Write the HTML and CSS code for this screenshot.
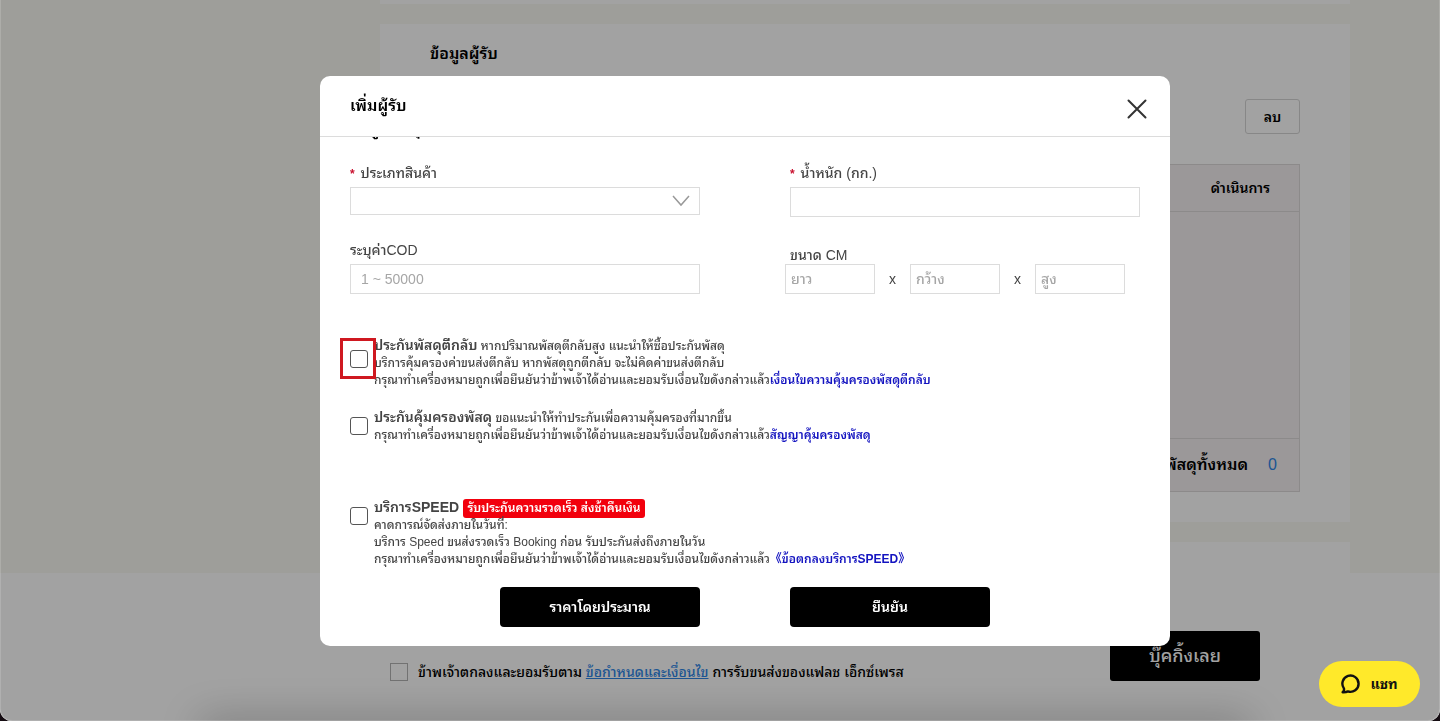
FILE: index.html
```html
<!DOCTYPE html>
<html lang="th">
<head>
<meta charset="utf-8">
<meta name="viewport" content="width=device-width, initial-scale=1">
<title>เพิ่มผู้รับ</title>
<link rel="stylesheet" href="styles.css">
</head>
<body>
<div class="app">
  <main class="page">
    <section class="card card-prev"></section>
    <section class="card card-recipients">
      <h2 class="card-title">ข้อมูลผู้รับ</h2>
      <div class="toolbar"><button type="button" class="delete-btn">ลบ</button></div>
      <table class="recipients">
        <thead><tr><th scope="col">ดำเนินการ</th></tr></thead>
        <tbody><tr><td></td></tr></tbody>
        <tfoot><tr><td><span class="total-label">พัสดุทั้งหมด</span><span class="total-value">0</span></td></tr></tfoot>
      </table>
    </section>
    <section class="card card-next"></section>
  </main>
  <footer class="booking-bar">
    <div class="agree">
      <input type="checkbox" id="agree" class="agree-box">
      <label for="agree">ข้าพเจ้าตกลงและยอมรับตาม <a href="#terms" class="terms">ข้อกำหนดและเงื่อนไข</a> การรับขนส่งของแฟลช เอ็กซ์เพรส</label>
    </div>
    <button type="button" class="book-btn">บุ๊คกิ้งเลย</button>
  </footer>
  <div class="bar-shadow"></div>
</div>

<div class="overlay">
  <div class="modal" role="dialog" aria-modal="true" aria-labelledby="modal-title">
    <header class="modal-head">
      <h1 class="modal-title" id="modal-title">เพิ่มผู้รับ</h1>
      <button type="button" class="close-btn" aria-label="ปิด">
        <svg width="20" height="20" viewBox="0 0 20 20" fill="none" stroke="#333" stroke-width="2" stroke-linecap="round"><path d="M1.5 1.5 18.500 18.500M18.500 1.5 1.5 18.500"/></svg>
      </button>
    </header>
    <form class="modal-body">
      <h2 class="section-title">ข้อมูลพัสดุ</h2>
      <div class="fields fields-first">
        <div class="field">
          <label for="type"><span class="req">*</span> ประเภทสินค้า</label>
          <div class="select-wrap">
            <select id="type" class="box"><option></option></select>
            <svg class="chevron" width="18" height="12" viewBox="0 0 18 12" fill="none" stroke="#999" stroke-width="1.500"><path d="M1 1l8 9 8-9"/></svg>
          </div>
        </div>
        <div class="field">
          <label for="weight"><span class="req">*</span> น้ำหนัก (กก.)</label>
          <input id="weight" class="box" type="text">
        </div>
      </div>
      <div class="fields">
        <div class="field">
          <label for="cod">ระบุค่าCOD</label>
          <input id="cod" class="box" type="text" placeholder="1 ~ 50000">
        </div>
        <div class="field field-size">
          <label for="len">ขนาด CM</label>
          <div class="sizes">
            <input id="len" class="box size" type="text" placeholder="ยาว">
            <span>x</span>
            <input class="box size" type="text" placeholder="กว้าง" aria-label="กว้าง">
            <span>x</span>
            <input class="box size" type="text" placeholder="สูง" aria-label="สูง">
          </div>
        </div>
      </div>
      <div class="option option-return">
        <div class="mark"><input type="checkbox" id="opt-return" class="tick"></div>
        <label for="opt-return"><b>ประกันพัสดุตีกลับ</b> หากปริมาณพัสดุตีกลับสูง แนะนำให้ซื้อประกันพัสดุ<br>บริการคุ้มครองค่าขนส่งตีกลับ หากพัสดุถูกตีกลับ จะไม่คิดค่าขนส่งตีกลับ<br>กรุณาทำเครื่องหมายถูกเพื่อยืนยันว่าข้าพเจ้าได้อ่านและยอมรับเงื่อนไขดังกล่าวแล้ว<a href="#return-terms">เงื่อนไขความคุ้มครองพัสดุตีกลับ</a></label>
      </div>
      <div class="option option-cover">
        <input type="checkbox" id="opt-cover" class="tick">
        <label for="opt-cover"><b>ประกันคุ้มครองพัสดุ</b> ขอแนะนำให้ทำประกันเพื่อความคุ้มครองที่มากขึ้น<br>กรุณาทำเครื่องหมายถูกเพื่อยืนยันว่าข้าพเจ้าได้อ่านและยอมรับเงื่อนไขดังกล่าวแล้ว<a href="#cover-terms">สัญญาคุ้มครองพัสดุ</a></label>
      </div>
      <div class="option option-speed">
        <input type="checkbox" id="opt-speed" class="tick">
        <label for="opt-speed"><b>บริการSPEED</b> <span class="tag">รับประกันความรวดเร็ว ส่งช้าคืนเงิน</span><br>คาดการณ์จัดส่งภายในวันที่:<br>บริการ Speed ขนส่งรวดเร็ว Booking ก่อน รับประกันส่งถึงภายในวัน<br>กรุณาทำเครื่องหมายถูกเพื่อยืนยันว่าข้าพเจ้าได้อ่านและยอมรับเงื่อนไขดังกล่าวแล้ว<a href="#speed-terms">《ข้อตกลงบริการSPEED》</a></label>
      </div>
      <div class="actions">
        <button type="button" class="action">ราคาโดยประมาณ</button>
        <button type="submit" class="action">ยืนยัน</button>
      </div>
    </form>
  </div>
</div>

<button type="button" class="chat">
  <svg width="20" height="20" viewBox="0 0 20 20" fill="none" stroke="#111" stroke-width="2.400" stroke-linejoin="round"><path d="M1.600 18.300c1.300-1 1.700-2.300 1.300-3.900A8.100 8.100 0 1 1 7 17.400c-1.500.8-3.300 1-5.400.9z"/></svg>
  <span>แชท</span>
</button>
</body>
</html>
```
FILE: styles.css
```css
*, *::before, *::after { box-sizing: border-box; }

body {
  margin: 0;
  background: #150c12;
  color: #000;
  font-family: "Liberation Sans", "Noto Sans Thai Looped", "Noto Sans Thai", "Noto Sans", "Noto Sans CJK SC", sans-serif;
  font-size: 14px;
  font-weight: 500;
  line-height: 20px;
}

h1, h2, th { margin: 0; font-weight: 600; }
button, input, select { font: inherit; }

.app {
  position: relative;
  display: flex;
  flex-direction: column;
  height: 100vh;
  overflow: hidden;
  border-radius: 0 0 12px 12px;
  background: #f9f9f3;
}

.page {
  flex: 1;
  min-height: 0;
  overflow: hidden;
  display: flex;
  flex-direction: column;
  gap: 20px;
  padding: 0 90px 0 380px;
}

.card { background: #fff; flex: none; }
.card-prev { height: 4px; }
.card-next { height: 60px; }
.card-recipients { padding: 18px 50px 30px; }

.card-title { font-size: 16px; line-height: 24px; }

.toolbar {
  display: flex;
  justify-content: flex-end;
  padding: 33px 0 30px;
}

.delete-btn {
  width: 55px;
  height: 35px;
  padding: 0;
  border: 1px solid #d5d5d5;
  border-radius: 3px;
  background: #fff;
  color: #000;
  font-weight: 600;
}

.recipients {
  width: 100%;
  border-collapse: collapse;
  background: #f4eff1;
  border: 1px solid #dcd9da;
  text-align: right;
}

.recipients th {
  height: 47px;
  padding: 0 29px;
  border-bottom: 1px solid #dcd9da;
  text-align: right;
}

.recipients tbody td { height: 227px; }

.recipients tfoot td {
  height: 53px;
  padding: 0 22px;
  border-top: 1px solid #dcd9da;
  font-size: 16px;
  font-weight: 600;
}

.total-value { margin-left: 20px; color: #2f86e6; font-weight: 500; }

.booking-bar {
  flex: none;
  display: flex;
  justify-content: space-between;
  align-items: flex-start;
  height: 148px;
  padding: 58px 180px 0 390px;
  background: #fff;
}

.agree {
  display: flex;
  align-items: center;
  gap: 10px;
  padding-top: 30px;
}

.agree label { line-height: 22px; }
.terms { color: #2f86e6; }

.agree-box {
  appearance: none;
  width: 18px;
  height: 18px;
  margin: 0;
  border: 1px solid #b4b4b4;
}

.book-btn {
  width: 150px;
  height: 50px;
  padding: 0;
  border: 0;
  border-radius: 3px;
  background: #000;
  color: #fff;
  font-size: 18px;
}

.bar-shadow {
  position: absolute;
  right: 190px;
  bottom: -20px;
  left: 200px;
  height: 20px;
  box-shadow: 0 0 40px 0 rgba(0, 0, 0, .32);
}

.overlay {
  position: fixed;
  inset: 0;
  display: flex;
  justify-content: center;
  align-items: flex-start;
  padding: 76px 0 0 50px;
  border: 1px solid rgba(255, 255, 255, .15);
  border-top: 0;
  border-radius: 0 0 12px 12px;
  background: rgba(0, 0, 0, .365);
}

.modal {
  display: flex;
  flex-direction: column;
  width: 850px;
  border-radius: 10px;
  background: #fff;
  overflow: hidden;
}

.modal-head {
  display: flex;
  justify-content: space-between;
  align-items: flex-start;
  height: 61px;
  padding: 18px 23px 0 30px;
  border-bottom: 1px solid #dcdcdc;
}

.modal-title { font-size: 16px; line-height: 24px; }

.close-btn {
  display: flex;
  padding: 5px 0 0;
  border: 0;
  background: none;
}

.modal-body {
  display: flex;
  flex-direction: column;
  justify-content: flex-end;
  height: 509px;
  padding: 0 30px 19px;
  overflow: hidden;
  color: #444;
}

.section-title { color: #000; font-size: 16px; line-height: 24px; }

.fields {
  display: grid;
  grid-template-columns: 1fr 1fr;
  gap: 90px;
  align-items: end;
  padding-bottom: 43px;
}

.fields-first {
  align-items: start;
  padding: 18px 0 19px;
}

.field { display: flex; flex-direction: column; }
.field > label { line-height: 28px; }
.field-size > label { line-height: 18px; }
.req { color: #c8102e; margin-right: 2px; font-size: 12px; font-weight: 600; line-height: 12px; }

.box {
  width: 100%;
  height: 30px;
  padding: 0 10px;
  border: 1px solid #dcdcdc;
  border-radius: 0;
  background: #fff;
  color: #444;
}

.box::placeholder { color: #a6a6a6; opacity: 1; }

.select-wrap { position: relative; display: flex; }
.select-wrap .box { height: 28px; appearance: none; }

.chevron {
  position: absolute;
  top: 8px;
  right: 10px;
  pointer-events: none;
}

.sizes {
  display: flex;
  align-items: center;
  margin-left: -5px;
}

.sizes span { width: 35px; text-align: center; }
.sizes .size { width: 90px; padding: 0 5px; }

.option {
  display: flex;
  align-items: flex-start;
  gap: 6px;
  font-size: 12px;
  line-height: 17px;
}

.option b { font-size: 14px; font-weight: 600; line-height: 17px; }
.option a { color: #1414c0; font-weight: 600; text-decoration: none; }
.option-return { padding-bottom: 20px; }
.option-cover { padding-bottom: 55px; }
.option-speed { padding-bottom: 19px; }

.tick {
  appearance: none;
  flex: none;
  width: 18px;
  height: 18px;
  margin: 8px 0 0;
  border: 1px solid #555;
  border-radius: 3px;
  background: #fff;
}

.mark { position: relative; display: flex; padding-top: 5px; }

.mark::after {
  content: "";
  position: absolute;
  top: 1px;
  left: -10px;
  width: 36px;
  height: 41px;
  border: 3px solid #cf1820;
  pointer-events: none;
}

.tag {
  display: inline-block;
  margin: -1px 0;
  padding: 1px 5px;
  border-radius: 3px;
  background: #f2000d;
  color: #fff;
  font-weight: 600;
}

.actions { display: flex; justify-content: center; gap: 90px; }

.action {
  width: 200px;
  height: 40px;
  padding: 0;
  border: 0;
  border-radius: 4px;
  background: #000;
  color: #fff;
  font-weight: 600;
}

.chat {
  position: fixed;
  right: 20px;
  bottom: 14px;
  display: flex;
  align-items: center;
  justify-content: center;
  gap: 9px;
  width: 101px;
  height: 46px;
  padding: 0;
  border: 0;
  border-radius: 23px;
  background: #ffe92a;
  color: #111;
  font-weight: 700;
}
```
